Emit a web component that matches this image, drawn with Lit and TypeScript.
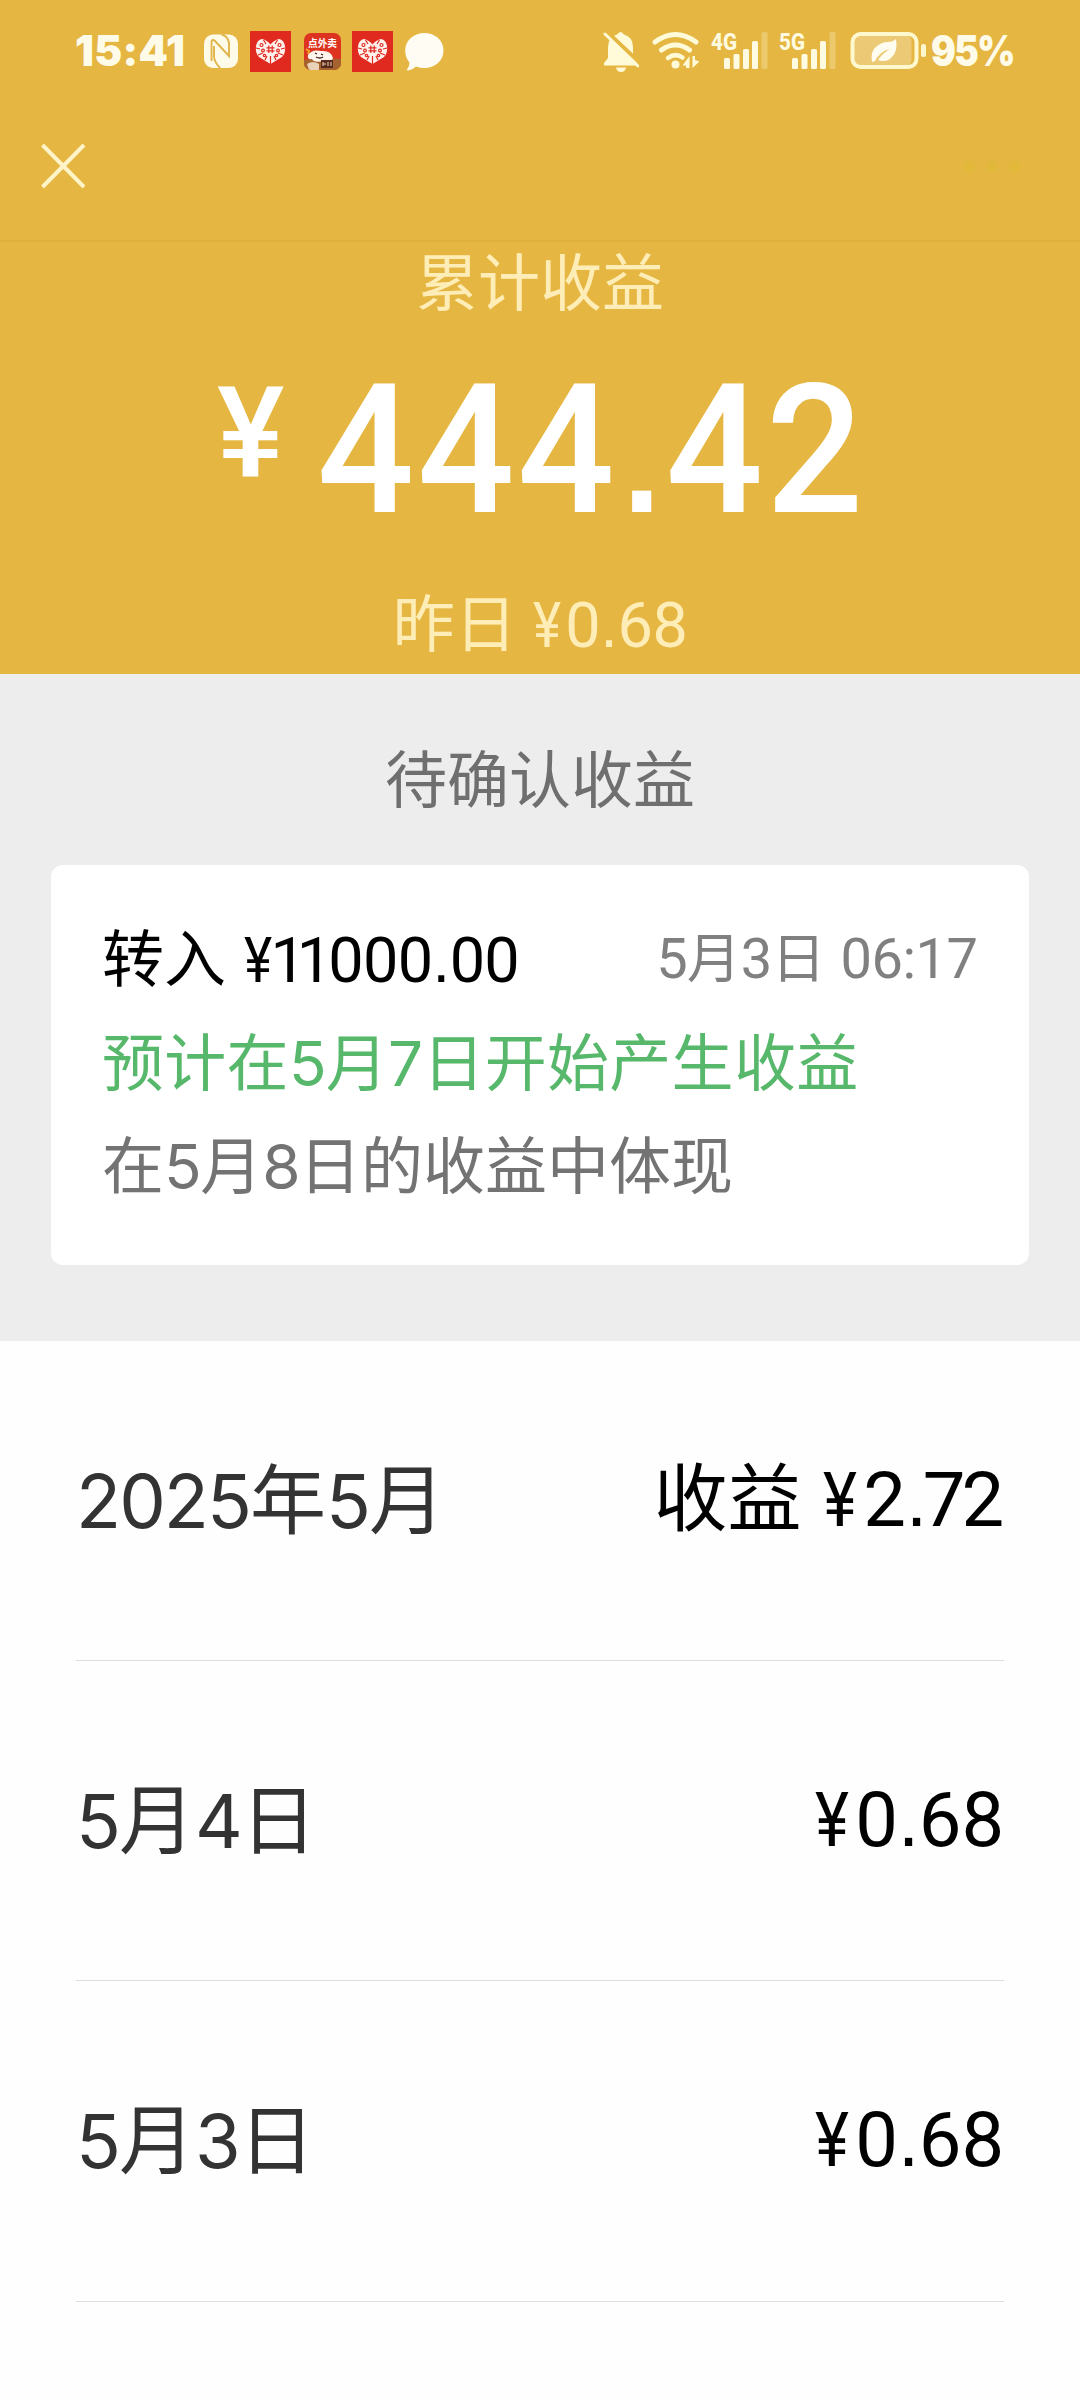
import { LitElement, html, css } from "lit";
import { customElement, property } from "lit/decorators.js";

/** Wraps runs of digits so that they can be tracked apart from the Chinese text. */
const withDigits = (text: string) =>
  text.split(/(\d+)/).filter(Boolean).map((part) =>
    /\d/.test(part) ? html`<span class="num">${part}</span>` : part);

const MONEY_CLASSES: Record<string, string> = { "¥": "sign", ".": "dot", "11": "ones", "7": "seven" };

/** An amount with a narrow yen sign, a square decimal point and kerned digits. */
const money = (text: string) =>
  text.split(/([¥.7]|11)/).filter(Boolean).map((part) =>
    MONEY_CLASSES[part] ? html`<span class=${MONEY_CLASSES[part]}>${part}</span>` : part);

const moneyStyles = css`
  .sign { display: inline-block; transform: scaleX(0.85); transform-origin: left; }
  .dot { display: inline-block; width: 0.274em; text-align: center; letter-spacing: 0; font-family: "Liberation Sans", sans-serif; line-height: 1; }
  .ones { letter-spacing: -9px; margin-left: -6px; margin-right: 5px; }
  .seven { margin: 0 -4px; }
`;

@customElement("status-bar")
class StatusBar extends LitElement {
  static styles = css`
    :host { display: flex; align-items: center; justify-content: space-between; height: 102px; padding: 0 66px 0 75px; color: #fffbe9; font-family: Inter, sans-serif; font-weight: 900; }
    .group { display: flex; align-items: center; }
    svg { display: block; height: 44px; flex: none; }
    .time { font-size: 42px; line-height: 44px; letter-spacing: 0.3px; width: 129px; white-space: nowrap; }
    .percent { font-size: 42px; line-height: 44px; letter-spacing: -2px; width: 83px; margin-left: 4px; white-space: nowrap; transform: scaleX(0.88); transform-origin: left; }
    .w1 { width: 34px; } .w2 { width: 41px; } .w3 { width: 37px; } .w4 { width: 39px; }
    .g12 { margin-left: 12px; } .g13 { margin-left: 13px; } .g11 { margin-left: 11px; }
    .bell { width: 36px; } .wifi { width: 48px; margin-left: 13px; }
    .sig { width: 58px; margin-left: 10px; } .bat { width: 78px; margin-left: 13px; }
    .net { font: 800 24px Roboto, sans-serif; }
  `;
  private heart(cls: string) {
    return html`<svg class=${cls} viewBox="0 -2 41 44">
      <rect width="41" height="41" fill="#e02a20"></rect>
      <path d="M20.500 33L9 26Q5 22 6 15Q7 9 12 8Q17 9 20.500 13.500Q24 9 29 8Q34 9 35 15Q36 22 32 26Z" fill="#fff1ec"></path>
      <g stroke="#e02a20" stroke-width="1.200" fill="none">
        <path d="M20.500 25V33M13.500 9l2.500 4M27.500 9l-2.500 4M6 17l4 1M35 17l-4 1M8 24l5-2M33 24l-5-2M15 29l2-4M26 29l-2-4"></path>
        <circle cx="11.500" cy="14" r="1.500"></circle><circle cx="29.500" cy="14" r="1.500"></circle>
        <circle cx="13" cy="19.500" r="1.400"></circle><circle cx="28" cy="19.500" r="1.400"></circle>
        <circle cx="14.500" cy="24.500" r="1.200"></circle><circle cx="26.500" cy="24.500" r="1.200"></circle>
        <path d="M18.800 14.500v7.500M22.200 14.500v7.500M16.500 16.800h8M16.500 19.800h8"></path>
      </g>
    </svg>`;
  }
  private signal(label: string) {
    return html`<svg class="sig" viewBox="710 29 58 44">
      <text class="net" x="711" y="50" textLength="26" lengthAdjust="spacingAndGlyphs" fill="#fffbe0">${label}</text>
      <g fill="#fffbe0">
        <rect x="724" y="58" width="6" height="11" rx="1.500"></rect>
        <rect x="733.500" y="54" width="6" height="15" rx="1.500"></rect>
        <rect x="743" y="49" width="6" height="20" rx="1.500"></rect>
        <rect x="752" y="41" width="6" height="28" rx="1.500"></rect>
        <rect x="761.500" y="32" width="6" height="37" rx="1.500" opacity="0.28"></rect>
      </g>
    </svg>`;
  }
  render() {
    return html`
      <div class="group">
        <span class="time">15:41</span>
        <svg class="w1" viewBox="204 29 34 44">
          <rect x="204" y="34.500" width="34" height="33.500" rx="9" fill="#fffbe9"></rect>
          <path d="M211.500 61V42Q212 38.500 215 41L229 56V42M214 46V57Q214.500 62 220 68M221.500 34.500Q228 36 229 43" fill="none" stroke="#dfb44a" stroke-width="1.900"></path>
        </svg>
        ${this.heart("w2 g12")}
        <svg class="w3 g13" viewBox="0 -4 37 44">
          <defs><clipPath id="c"><rect width="37" height="37" rx="7"></rect></clipPath></defs>
          <g clip-path="url(#c)">
            <rect width="37" height="37" fill="#dd3421"></rect>
            <path d="M0 27Q12 24 37 26V37H0Z" fill="#a4632f"></path>
            <text x="4" y="14" font-size="10" font-weight="700" font-family="Noto Sans CJK SC, sans-serif" textLength="29" lengthAdjust="spacingAndGlyphs" fill="#fff">点外卖</text>
            <path d="M4 22Q8 16 17 18Q27 17 29 25Q28 29 19 28Q10 30 8 26Q3 27 4 22Z" fill="#fff6ef"></path>
            <path d="M11 20l2 1M17 21l2 1M12 24q4 2 7 0" stroke="#3b211a" stroke-width="1.300" fill="none"></path>
            <rect x="17" y="27" width="12" height="8" fill="#5a2b1c"></rect>
            <path d="M19 29v4M19 31h3M24 29v4M27 29v4" stroke="#f2d9bd"></path>
            <path d="M2 16l3 2-1 3" stroke="#f0a326" stroke-width="2" fill="none"></path>
            <path d="M3 31q6-4 12 0v6H5z" fill="#ead2b8"></path>
          </g>
        </svg>
        ${this.heart("w2 g11")}
        <svg class="w4 g12" viewBox="404.500 29 39 44">
          <path d="M424 33C434 33 443 40 443 50.500C443 61 434 68 424 68Q419 68 415.500 66.500Q412 70 407 70.500Q405.800 70 407 68.500Q409 66 409 62.500Q404.700 57.500 404.700 50.500C404.700 40 414 33 424 33Z" fill="#fffdf3"></path>
        </svg>
      </div>
      <div class="group">
        <svg class="bell" viewBox="603 29 36 44">
          <path d="M604 65.500V63L608 58V47Q608 37 617 34.500Q620.500 29.500 624 34.500Q633 37 633 47V58L637 63V65.500Z" fill="#fffbd8"></path>
          <path d="M616 67.500H626Q625 72 621 72Q617 72 616 67.500Z" fill="#fffbd8"></path>
          <path d="M606 31L641 64" stroke="#e5b640" stroke-width="4"></path>
          <path d="M605 34L638 66" stroke="#fffbd8" stroke-width="3" stroke-linecap="round"></path>
        </svg>
        <svg class="wifi" viewBox="652.500 29 48 44">
          <g fill="none" stroke="#fffbd8" stroke-width="5" stroke-linecap="round">
            <path d="M655.500 42Q676 27 696.500 42"></path>
            <path d="M662 50Q676 40 690 50"></path>
            <path d="M668.500 58Q676 52.500 683 57.500" stroke-width="4.500"></path>
          </g>
          <circle cx="676" cy="64.500" r="4" fill="#fffbd8"></circle>
          <path d="M690 56V68H686.500V65.500H683Z M693 68V56H695.500V60L700 61.500Z" fill="#fffbd8"></path>
        </svg>
        ${this.signal("4G")}
        ${this.signal("5G")}
        <svg class="bat" viewBox="849 29 78 44">
          <rect x="853.500" y="35" width="58" height="31" rx="6" fill="#fff" opacity="0.27"></rect>
          <rect x="852.500" y="34" width="64" height="33" rx="8" fill="none" stroke="#fff7cd" stroke-width="4"></rect>
          <rect x="921" y="44" width="5" height="13" rx="2" fill="#fff7cd"></rect>
          <path d="M896 39Q898 51 892 57Q887 63 878 60Q883 53 890 49Q880 51 875 61L872 62Q870 51 877 46Q882 42 888 42Q893 42 896 39Z" fill="#fffdf0"></path>
        </svg>
        <span class="percent">95%</span>
      </div>`;
  }
}

@customElement("income-row")
class IncomeRow extends LitElement {
  @property() label = "";
  @property() caption = "";
  @property() amount = "";
  static styles = [moneyStyles, css`
    :host { display: flex; justify-content: space-between; height: 319.5px; border-bottom: 1px solid #dedede; white-space: nowrap; line-height: 319px; font-family: Inter, "Noto Sans CJK SC", sans-serif; font-size: 76px; }
    :host(:first-child) { height: 318.5px; line-height: 318px; }
    .label { color: #333; }
    .num { font-size: 74px; letter-spacing: -2px; }
    .value { display: flex; color: #000; font-family: Roboto, "Noto Sans CJK SC", sans-serif; font-size: 74px; }
    .caption { margin-right: 22px; }
    .amount { font-size: 76px; font-weight: 450; letter-spacing: -0.100px; }
  `];
  render() {
    return html`<div class="label">${withDigits(this.label)}</div>
      <div class="value">${this.caption ? html`<span class="caption">${this.caption}</span>` : ""}<span class="amount">${money(this.amount)}</span></div>`;
  }
}

@customElement("app-root")
class AppRoot extends LitElement {
  static styles = [moneyStyles, css`
    :host { display: flex; flex-direction: column; width: 1080px; height: 2400px; overflow: hidden; background: #fefefe; font-family: Roboto, "Noto Sans CJK SC", sans-serif; font-size: 62px; line-height: 80px; }
    .hero { height: 674px; background: #e5b641; flex: none; }
    .nav { height: 140px; display: flex; align-items: flex-start; justify-content: space-between; padding: 40px 56px 0 40px; box-sizing: border-box; border-bottom: 2px solid #e1b03c; }
    .nav svg { display: block; }
    .summary { display: flex; flex-direction: column; align-items: center; color: #ffedb8; white-space: nowrap; }
    .title { margin-top: 3px; }
    .total { display: flex; align-self: flex-start; align-items: flex-start; color: #fff; font-weight: 500; margin: 57px 0 0 217px; height: 150px; }
    .yen { font-size: 127px; line-height: 103px; width: 100px; }
    .sum { font-size: 180px; line-height: 138px; letter-spacing: 3.100px; transform: scaleX(0.95); transform-origin: left; }
    .sum .dot { font-size: 142px; font-weight: 700; width: 51px; }
    .yesterday { display: flex; margin-top: 54px; gap: 16px; }
    .yesterday .cash { letter-spacing: -0.500px; font-size: 63px; }
    .pending { height: 667px; flex: none; box-sizing: border-box; background: #ededed; padding: 68px 51px 0; text-align: center; }
    .head { color: #6f6f6f; }
    .card { height: 400px; margin-top: 43px; box-sizing: border-box; padding: 56px 51px 0; background: #fff; border-radius: 12px; text-align: left; white-space: nowrap; }
    .line { display: flex; justify-content: space-between; height: 80px; color: #000; }
    .in { margin-left: 18px; font-size: 63px; letter-spacing: -0.700px; font-weight: 450; }
    .when { color: #808080; font-size: 54px; line-height: 76px; }
    .when .num { font-size: 56px; letter-spacing: -0.800px; }
    .clock { font-size: 56px; margin-left: 15px; letter-spacing: -0.500px; margin-right: 0.500px; }
    .note { font-family: Inter, "Noto Sans CJK SC", sans-serif; margin-top: 23px; height: 80px; color: #737373; }
    .note .num { letter-spacing: -1.500px; }
    .green { color: #57b86b; letter-spacing: 0.300px; }
    .green .num { letter-spacing: -0.800px; }
    .list { padding: 0 76px; }
  `];
  render() {
    return html`
      <section class="hero">
        <status-bar></status-bar>
        <nav class="nav">
          <svg width="46" height="48" viewBox="40 142 46 48"><path d="M42.500 145L84 187M84 145L42.500 187" stroke="#fff3c8" stroke-width="4"></path></svg>
          <svg width="64" height="48" viewBox="0 0 64 48"><g fill="#e1b83a"><circle cx="9" cy="25" r="6"></circle><circle cx="32" cy="25" r="6"></circle><circle cx="55" cy="25" r="6"></circle></g></svg>
        </nav>
        <div class="summary">
          <div class="title">累计收益</div>
          <div class="total"><span class="yen">¥</span><span class="sum">${money("444.42")}</span></div>
          <div class="yesterday"><span>昨日</span><span class="cash">${money("¥0.68")}</span></div>
        </div>
      </section>
      <section class="pending">
        <div class="head">待确认收益</div>
        <div class="card">
          <div class="line">
            <div>转入<span class="in">${money("¥11000.00")}</span></div>
            <div class="when">${withDigits("5月3日")}<span class="clock">06:17</span></div>
          </div>
          <div class="note green">${withDigits("预计在5月7日开始产生收益")}</div>
          <div class="note">${withDigits("在5月8日的收益中体现")}</div>
        </div>
      </section>
      <section class="list">
        <income-row label="2025年5月" caption="收益" amount="¥2.72"></income-row>
        <income-row label="5月4日" amount="¥0.68"></income-row>
        <income-row label="5月3日" amount="¥0.68"></income-row>
      </section>`;
  }
}
